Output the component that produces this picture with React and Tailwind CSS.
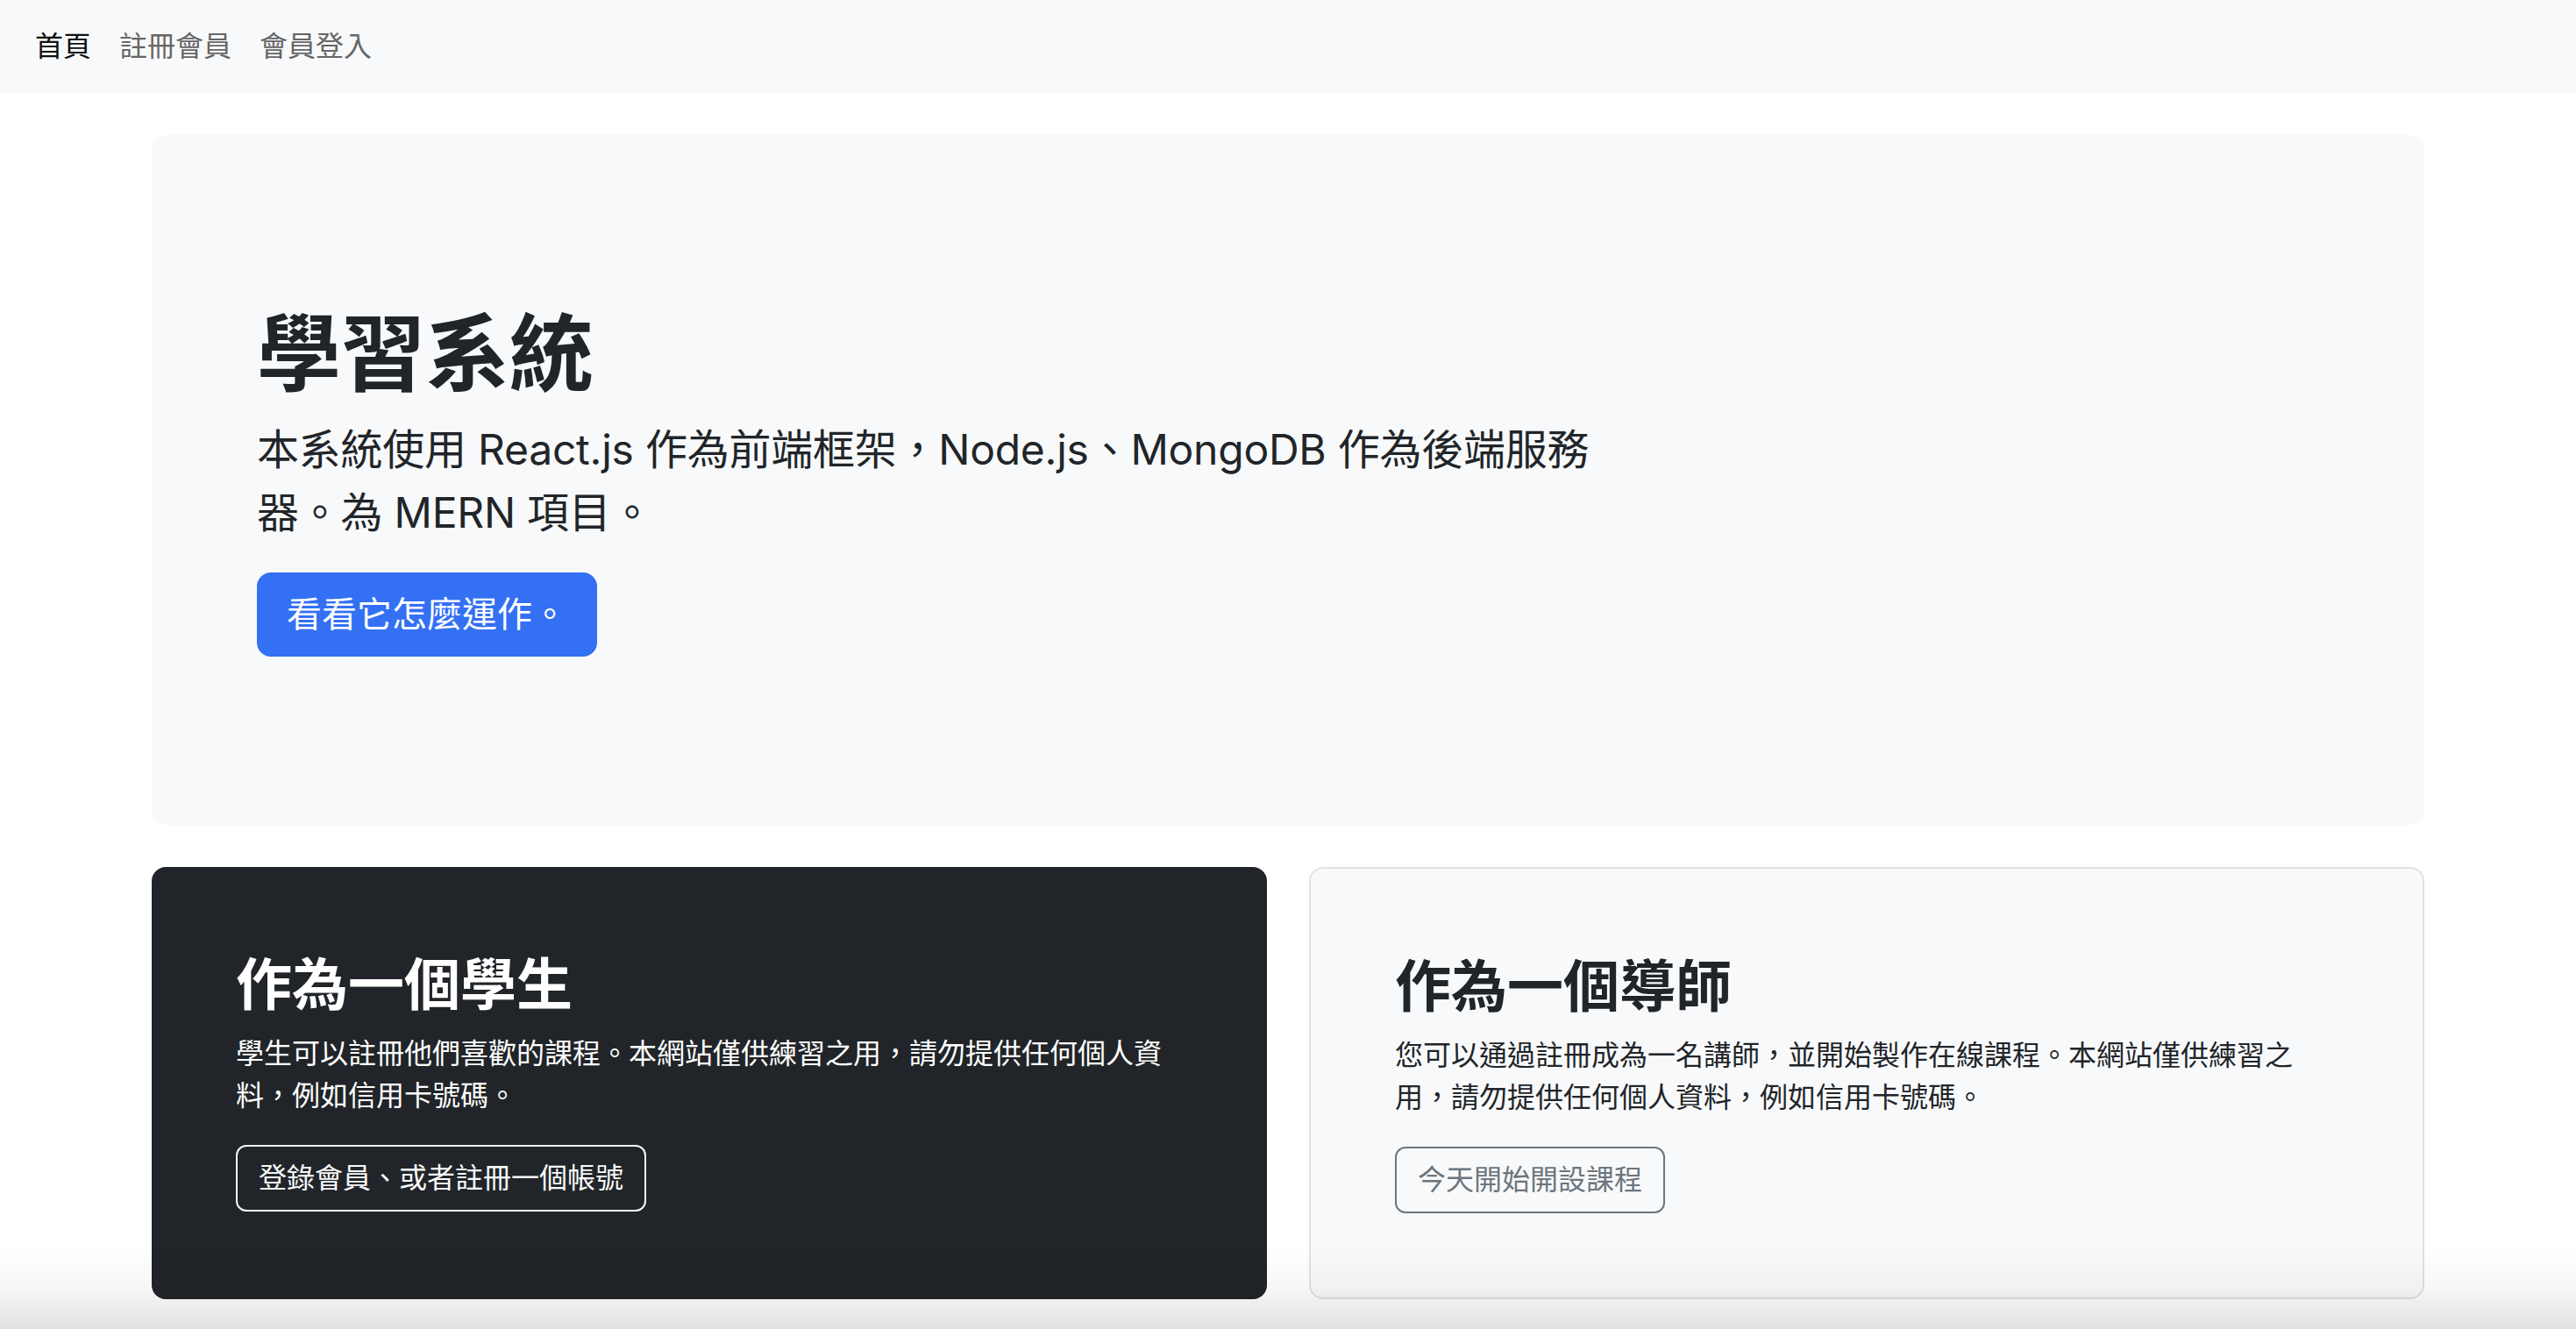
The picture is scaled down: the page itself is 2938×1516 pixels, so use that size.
const font = {
  fontFamily: 'Inter, "Noto Sans CJK TC", "Noto Sans", sans-serif',
};

function NavBar() {
  return (
    <nav className="h-[106px] bg-[#f8f9fa] flex items-center px-6">
      <a className="px-4 text-[32px] leading-[48px] text-[#111111]">首頁</a>
      <a className="px-4 text-[32px] leading-[48px] text-[#666666]">註冊會員</a>
      <a className="px-4 text-[32px] leading-[48px] text-[#666666]">會員登入</a>
    </nav>
  );
}

function Hero() {
  return (
    <div className="bg-[#f8f9fa] rounded-2xl p-24 mb-12">
      <div className="py-24 px-6">
        <h1 className="text-[96px] leading-[1.2] font-bold text-[#212529] mb-4">
          學習系統
        </h1>
        <p className="w-2/3 text-[48px] leading-[1.5] tracking-[-0.005em] text-[#212529] mb-8">
          本系統使用 React.js 作為前端框架，Node.js、MongoDB 作為後端服務器。為 MERN 項目。
        </p>
        <button className="bg-[#3370f4] border-2 border-[#3370f4] text-white text-[40px] leading-[1.5] px-8 py-4 rounded-2xl">
          看看它怎麼運作。
        </button>
      </div>
    </div>
  );
}

function InfoCard({ dark, title, text, action }) {
  return (
    <div
      className={
        dark
          ? "h-full p-24 rounded-2xl bg-[#212529] text-white"
          : "h-full p-24 rounded-2xl bg-[#f8f9fa] border-2 border-[#dee2e6] text-[#212529]"
      }
    >
      <h2 className="text-[64px] leading-[1.2] font-semibold mb-4">{title}</h2>
      <p className="text-[32px] leading-[1.5] mb-8">{text}</p>
      <button
        className={
          dark
            ? "border-2 border-[#f8f9fa] text-[#f8f9fa] text-[32px] leading-[1.5] px-6 py-3 rounded-xl"
            : "border-2 border-[#6c757d] text-[#6c757d] text-[32px] leading-[1.5] px-6 py-3 rounded-xl"
        }
      >
        {action}
      </button>
    </div>
  );
}

export default function App() {
  return (
    <div className="min-h-screen bg-white" style={font}>
      <NavBar />
      <main className="mx-auto max-w-[2640px] px-6 pt-12">
        <Hero />
        <div className="grid grid-cols-2 gap-12 items-stretch">
          <InfoCard
            dark
            title="作為一個學生"
            text="學生可以註冊他們喜歡的課程。本網站僅供練習之用，請勿提供任何個人資料，例如信用卡號碼。"
            action="登錄會員、或者註冊一個帳號"
          />
          <InfoCard
            title="作為一個導師"
            text="您可以通過註冊成為一名講師，並開始製作在線課程。本網站僅供練習之用，請勿提供任何個人資料，例如信用卡號碼。"
            action="今天開始開設課程"
          />
        </div>
      </main>
      {/* bottom window shadow from the screenshot */}
      <div className="fixed inset-x-0 bottom-0 h-[96px] pointer-events-none bg-linear-to-b from-transparent via-black/[0.03] to-black/[0.12]" />
    </div>
  );
}
